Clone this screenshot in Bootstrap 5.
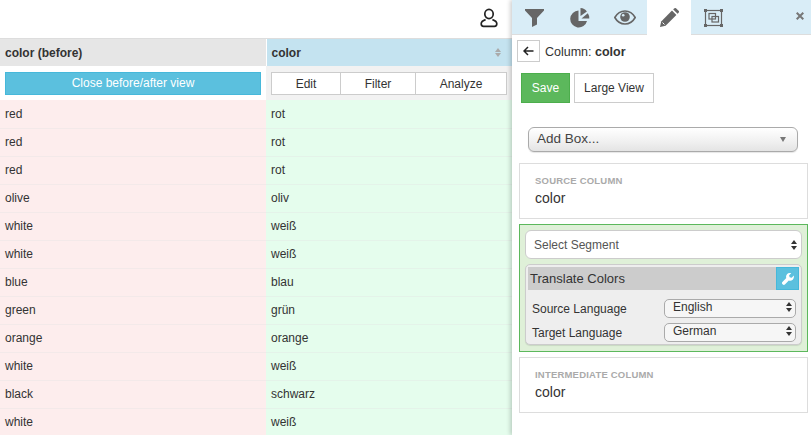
<!DOCTYPE html>
<html lang="en">
<head>
<meta charset="utf-8">
<title>Column: color</title>
<link rel="stylesheet" href="https://cdn.jsdelivr.net/npm/bootstrap@5.3.0/dist/css/bootstrap.min.css">
<style>
html,body{height:435px;overflow:hidden}
body{font-family:"Liberation Sans",Arial,sans-serif;font-size:12px;color:#333;background:#fff}
.app-shell{width:811px;height:435px;overflow:hidden}
.data-pane{width:512px;flex:none}
.top-strip{height:39px;border-bottom:1px solid #ddd;padding-right:13px}
.grid-table{width:512px;table-layout:fixed;border-collapse:collapse;margin:0}
.grid-table th,.grid-table td{padding:0 5px;font-size:12px;vertical-align:middle}
.head-row th{height:27px;font-weight:700}
.th-before{width:266px;background:#e6e6e6}
.th-after{background:#c4e3f0;border-left:1px solid #fff}
.action-row td{height:34px;padding-top:1px}
.td-close{background:#fff}
.td-actions{background:#f2f2f2}
.close-view{display:block;width:100%;height:23px;background:#5bc0de;border:1px solid #46b8da;color:#fff;font-size:12px;padding:0;border-radius:0;line-height:21px}
.action-set{display:flex;border:1px solid #ccc;height:23px;background:#fff}
.action-set span{display:flex;align-items:center;justify-content:center;border-right:1px solid #ccc;color:#333}
.action-set span:nth-child(1){width:69px}
.action-set span:nth-child(2){width:75px}
.action-set span:nth-child(3){flex:1;border:0}
.grid-table tbody.rows td{height:28px;border-bottom:1px solid #f3e9e9}
.cell-old{background:#fdeded}
.cell-new{background:#e5fded}
.grid-table tbody.rows td.cell-new{border-bottom-color:#e4f3e9}
.side-pane{width:299px;flex:none;box-shadow:-2px 0 4px rgba(0,0,0,.18);background:#fff;position:relative;height:435px}
.tab-strip{height:35px;background:#d9edf7;border-bottom:1px solid #ddd;padding-left:0}
.tab-cell{width:45px;height:35px;display:flex;align-items:center;justify-content:center}
.tab-live{background:#fff;height:35px;margin-bottom:-1px;width:44px;margin-left:0}
.tab-gap{width:45.5px}
.crumb{padding:5px 5px 0;height:34px}
.back-box{width:23px;height:22px;border:1px solid #ccc;background:#fff;display:flex;align-items:center;justify-content:center;margin-right:5px}
.crumb-text{font-size:12.5px}
.action-btns{padding:4px 9px 0;height:38px}
.save-btn{width:49px;height:30px;background:#5cb85c;border:1px solid #4cae4c;color:#fff;font-size:12px;border-radius:0;padding:0}
.large-btn{width:80px;height:30px;background:#fff;border:1px solid #ccc;color:#333;font-size:12px;border-radius:0;padding:0;margin-left:4px}
.add-row{padding:20px 13px 0 16px}
.add-box{height:25px;border:1px solid #aaa;border-radius:6px;background:linear-gradient(#fff,#f0f0f0 60%,#e4e4e4);box-shadow:0 1px 1px rgba(0,0,0,.1);padding:0 8px;font-size:13.5px;color:#444}
.caret-down{width:0;height:0;border-left:3.5px solid transparent;border-right:3.5px solid transparent;border-top:5px solid #777;margin-right:3px}
.info-box{margin:11px 3px 0 7px;border:1px solid #ddd;padding:11px 15px 0;height:56px}
.info-box.last-box{margin-top:5px}
.info-label{font-size:9.5px;font-weight:700;color:#aaa;line-height:12px;letter-spacing:.2px}
.info-value{font-size:14px;line-height:20px;margin-top:1px;color:#333}
.step-box{margin:5px 3px 0 7px;border:1px solid #5cb85c;background:#dff0d8;height:128px;padding:5px 5px 0}
.seg-select{height:29px;border:1px solid #ccc;border-radius:6px;background:#fff;padding:0 4px 0 8px;font-size:12px;color:#555}
.trans-panel{margin-top:5px;height:81px;background:#eee;border:1px solid #ccc;border-radius:5px;padding:2px;box-shadow:0 1px 1px rgba(0,0,0,.1)}
.trans-title{height:23px;background:#ccc;font-size:13px;color:#333;padding-left:2px;margin-bottom:7px}
.wrench-btn{width:23px;height:23px;background:#5bc0de;border:1px solid #46b8da;display:flex;align-items:center;justify-content:center}
.param-row{height:24px;padding:0 3px 0 4px;font-size:12px}
.param-select{width:132px;height:19px;border:1px solid #aaa;border-radius:5px;background:#f6f6f6;padding:0 3px 2px 8px;font-size:12px;line-height:14px;margin-top:-2px}
.updown{display:flex;flex-direction:column;gap:2px;flex:none}
.updown i{display:block;width:0;height:0;border-left:3px solid transparent;border-right:3px solid transparent}
.updown i:first-child{border-bottom:4px solid #333}
.updown i:last-child{border-top:4px solid #333}
.updown.muted-sort i:first-child{border-bottom-color:#aaa}
.updown.muted-sort i:last-child{border-top-color:#aaa}
.updown.muted-sort{gap:1px;margin-right:6px}
</style>
</head>
<body>
<div class="app-shell d-flex">
  <div class="data-pane">
    <div class="top-strip d-flex justify-content-end align-items-center">
      <svg width="18" height="20" viewBox="0 0 18 20" fill="none" stroke="#222" stroke-width="1.7" style="margin-top:-2px;margin-right:1px"><ellipse cx="9" cy="6" rx="4.2" ry="4.6"/><path d="M5.6 11.6C3 12.4 1.2 14 1.2 15.8c0 1.7.9 2.6 2.3 2.6h11c1.4 0 2.3-.9 2.3-2.6 0-1.8-1.800-3.400-4.400-4.200"/></svg>
    </div>
    <table class="grid-table">
      <thead>
        <tr class="head-row">
          <th class="th-before">color (before)</th>
          <th class="th-after"><div class="d-flex justify-content-between align-items-center"><span>color</span><span class="updown muted-sort"><i></i><i></i></span></div></th>
        </tr>
        <tr class="action-row">
          <td class="td-close"><button type="button" class="close-view">Close before/after view</button></td>
          <td class="td-actions"><div class="action-set"><span>Edit</span><span>Filter</span><span>Analyze</span></div></td>
        </tr>
      </thead>
      <tbody class="rows">
        <tr><td class="cell-old">red</td><td class="cell-new">rot</td></tr>
        <tr><td class="cell-old">red</td><td class="cell-new">rot</td></tr>
        <tr><td class="cell-old">red</td><td class="cell-new">rot</td></tr>
        <tr><td class="cell-old">olive</td><td class="cell-new">oliv</td></tr>
        <tr><td class="cell-old">white</td><td class="cell-new">weiß</td></tr>
        <tr><td class="cell-old">white</td><td class="cell-new">weiß</td></tr>
        <tr><td class="cell-old">blue</td><td class="cell-new">blau</td></tr>
        <tr><td class="cell-old">green</td><td class="cell-new">grün</td></tr>
        <tr><td class="cell-old">orange</td><td class="cell-new">orange</td></tr>
        <tr><td class="cell-old">white</td><td class="cell-new">weiß</td></tr>
        <tr><td class="cell-old">black</td><td class="cell-new">schwarz</td></tr>
        <tr><td class="cell-old">white</td><td class="cell-new">weiß</td></tr>
      </tbody>
    </table>
  </div>
  <div class="side-pane">
    <div class="tab-strip d-flex align-items-start">
      <div class="tab-cell">
        <svg width="19" height="18" viewBox="0 0 19 18" fill="#666"><path d="M0 0h19v1.500L12 9v6.500L7 18V9L0 1.500z"/></svg>
      </div>
      <div class="tab-cell">
        <svg width="20" height="20" viewBox="0 0 20 20" fill="#666"><path d="M8.500 2.500A8.500 8.500 0 1 0 17 13H8.500z"/><path d="M10.500 0a8 8 0 0 1 6.400 3.500L10.500 8z"/><path d="M11.500 10.500l6.300-5.200A8.500 8.500 0 0 1 19.300 10.500z"/></svg>
      </div>
      <div class="tab-cell">
        <svg width="22" height="15" viewBox="0 0 22 15"><path d="M11 1C6 1 2.500 4.500.8 7.500 2.500 10.500 6 14 11 14s8.500-3.500 10.200-6.500C19.500 4.500 16 1 11 1z" fill="none" stroke="#666" stroke-width="1.600"/><circle cx="11" cy="7" r="4.800" fill="#666"/><circle cx="9.200" cy="5.200" r="1.300" fill="#d9edf7"/></svg>
      </div>
      <div class="tab-cell tab-live">
        <svg width="19" height="19" viewBox="0 0 19 19" fill="#666"><path d="M0 19l1.200-5.600L12 2.600l4.400 4.400L5.600 17.800z"/><path d="M13.200 1.400l1-1a1.500 1.500 0 0 1 2 0l2.400 2.400a1.500 1.500 0 0 1 0 2l-1 1z"/><path d="M2.500 14.500l2 2" stroke="#fff" stroke-width="1"/></svg>
      </div>
      <div class="tab-cell">
        <svg width="19" height="18" viewBox="0 0 19 18" fill="none" stroke="#666" stroke-width="1.200"><rect x="1.500" y="1.500" width="16" height="15"/><rect x="5" y="4.500" width="6.500" height="5.500"/><rect x="8" y="7.500" width="6.500" height="5.500"/><g fill="#666" stroke="none"><rect width="3" height="3"/><rect x="16" width="3" height="3"/><rect y="15" width="3" height="3"/><rect x="16" y="15" width="3" height="3"/></g></svg>
      </div>
      <div class="ms-auto tab-cell" style="width:auto;padding-right:7px;padding-top:0;height:31px">
        <svg width="8" height="8" viewBox="0 0 8 8" stroke="#777" stroke-width="2"><path d="M.7.700l6.600 6.600M7.300.700L.7 7.300"/></svg>
      </div>
    </div>
    <div class="crumb d-flex align-items-start">
      <span class="back-box"><svg width="11" height="10" viewBox="0 0 11 10" fill="none" stroke="#222" stroke-width="1.500"><path d="M10.500 5H1.200M5 1L1 5l4 4"/></svg></span>
      <span class="crumb-text" style="margin-top:3px">Column: <b>color</b></span>
    </div>
    <div class="action-btns d-flex align-items-start">
      <button type="button" class="save-btn">Save</button>
      <button type="button" class="large-btn">Large View</button>
    </div>
    <div class="add-row">
      <div class="add-box d-flex justify-content-between align-items-center"><span>Add Box...</span><span class="caret-down"></span></div>
    </div>
    <div class="info-box">
      <div class="info-label">SOURCE COLUMN</div>
      <div class="info-value">color</div>
    </div>
    <div class="step-box">
      <div class="seg-select d-flex justify-content-between align-items-center"><span>Select Segment</span><span class="updown"><i></i><i></i></span></div>
      <div class="trans-panel">
        <div class="trans-title d-flex justify-content-between align-items-center"><span>Translate Colors</span>
          <span class="wrench-btn"><svg width="12" height="12" viewBox="0 0 12 12" fill="#fff"><path d="M11.800 2.600L9.700 4.700 7.600 4.200 7.100 2.200 9.200.2C7.700-.3 6 .1 5 1.200 4 2.300 3.800 3.800 4.300 5L.4 9c-.6.600-.6 1.500 0 2.100l.4.400c.6.600 1.500.6 2.100 0L6.800 7.600c1.300.5 2.800.2 3.900-.8 1-1.100 1.400-2.800 1.100-4.200z"/></svg></span></div>
        <div class="param-row d-flex justify-content-between align-items-center"><span>Source Language</span><div class="param-select d-flex justify-content-between align-items-center"><span>English</span><span class="updown"><i></i><i></i></span></div></div>
        <div class="param-row d-flex justify-content-between align-items-center"><span>Target Language</span><div class="param-select d-flex justify-content-between align-items-center"><span>German</span><span class="updown"><i></i><i></i></span></div></div>
      </div>
    </div>
    <div class="info-box last-box">
      <div class="info-label">INTERMEDIATE COLUMN</div>
      <div class="info-value">color</div>
    </div>
  </div>
</div>
</body>
</html>
